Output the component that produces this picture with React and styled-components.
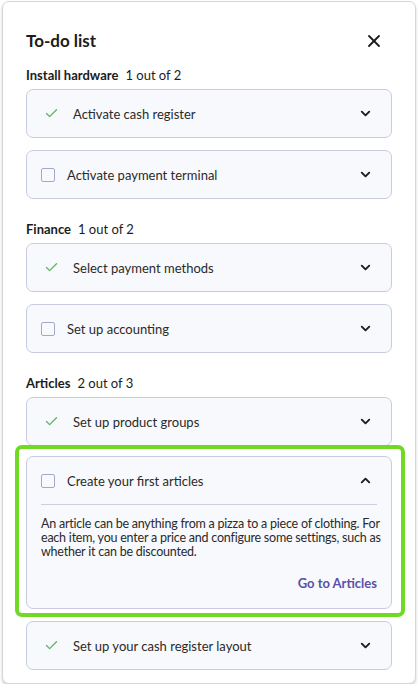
import React from "react";
import styled, { createGlobalStyle } from "styled-components";
import { ChevronDown, ChevronUp, X, Check } from "lucide-react";

const GlobalStyle = createGlobalStyle`
  html, body {
    margin: 0;
    padding: 0;
    background: #ffffff;
  }
  body {
    font-family: Lato, "Liberation Sans", sans-serif;
    color: #222;
  }
`;

const sections = [
  {
    title: "Install hardware",
    count: "1 out of 2",
    items: [
      { label: "Activate cash register", done: true },
      { label: "Activate payment terminal", done: false },
    ],
  },
  {
    title: "Finance",
    count: "1 out of 2",
    items: [
      { label: "Select payment methods", done: true },
      { label: "Set up accounting", done: false },
    ],
  },
  {
    title: "Articles",
    count: "2 out of 3",
    items: [
      { label: "Set up product groups", done: true },
      {
        label: "Create your first articles",
        done: false,
        open: true,
        text: "An article can be anything from a pizza to a piece of clothing. For each item, you enter a price and configure some settings, such as whether it can be discounted.",
        link: "Go to Articles",
      },
      { label: "Set up your cash register layout", done: true },
    ],
  },
];

const TodoItem = ({ item }) => {
  return (
    <Card $open={item.open}>
      <CardHeader>
        {item.done ? (
          <CheckMark>
            <Check size={15} strokeWidth={2.2} />
          </CheckMark>
        ) : (
          <Box />
        )}
        <Label>{item.label}</Label>
        <Toggle>
          {item.open ? (
            <ChevronUp size={15} strokeWidth={3} />
          ) : (
            <ChevronDown size={15} strokeWidth={3} />
          )}
        </Toggle>
      </CardHeader>
      {item.open && (
        <CardBody>
          <Description>{item.text}</Description>
          <LinkRow>
            <GoLink href="#">{item.link}</GoLink>
          </LinkRow>
        </CardBody>
      )}
    </Card>
  );
};

const App = () => {
  return (
    <>
      <GlobalStyle />
      <Panel>
        <TitleRow>
          <Title>To-do list</Title>
          <Close>
            <X size={20} strokeWidth={2.2} />
          </Close>
        </TitleRow>
        {sections.map((section) => (
          <Section key={section.title}>
            <SectionHeader>
              <strong>{section.title}</strong>
              <span>{section.count}</span>
            </SectionHeader>
            <CardList>
              {section.items.map((item) => (
                <TodoItem key={item.label} item={item} />
              ))}
            </CardList>
          </Section>
        ))}
      </Panel>
    </>
  );
};

const Panel = styled.div`
  margin: 1px 3px 0 2px;
  width: 414px;
  box-sizing: border-box;
  padding: 27px 23px 13px 23px;
  background: #fff;
  border: 1px solid #d6d6d6;
  border-radius: 7px;
  box-shadow: 0 2px 3px rgba(0, 0, 0, 0.18);
`;

const TitleRow = styled.div`
  display: flex;
  align-items: center;
  justify-content: space-between;
  height: 24px;
`;

const Title = styled.h1`
  margin: 0;
  font-size: 17px;
  font-weight: 700;
  line-height: 24px;
  color: #1c1c1c;
`;

const Close = styled.div`
  display: flex;
  color: #1c1c1c;
  margin-right: 8px;
`;

const Section = styled.section`
  margin-top: 22px;
  &:first-of-type {
    margin-top: 14px;
  }
`;

const SectionHeader = styled.div`
  display: flex;
  gap: 7px;
  font-size: 13px;
  line-height: 16px;
  margin-bottom: 6px;
  color: #1c1c1c;
  strong {
    font-weight: 700;
  }
`;

const CardList = styled.div`
  display: flex;
  flex-direction: column;
  gap: 12px;
`;

const Card = styled.div`
  position: relative;
  background: #f8f9fc;
  border: 1px solid #c9cce0;
  border-radius: 7px;
  padding: 0 14px;

  ${({ $open }) =>
    $open &&
    `
    margin-top: -2px;
    padding-bottom: 17px;
    &::after {
      content: "";
      position: absolute;
      top: -12px;
      left: -12px;
      right: -14px;
      bottom: -9px;
      border: 4px solid #6fd924;
      border-radius: 7px;
      pointer-events: none;
    }
  `}
`;

const CardHeader = styled.div`
  display: flex;
  align-items: center;
  height: 47px;
`;

const CheckMark = styled.span`
  display: flex;
  color: #5cba5e;
  margin-left: 3px;
  width: 29px;
`;

const Box = styled.span`
  width: 12px;
  height: 12px;
  border: 1.5px solid #a4a9c9;
  border-radius: 2px;
  margin-right: 12px;
  background: #f8f9fc;
`;

const Label = styled.span`
  flex: 1;
  font-size: 13px;
  color: #2a2a2a;
`;

const Toggle = styled.span`
  display: flex;
  color: #1c1c1c;
  margin-right: 4px;
`;

const CardBody = styled.div`
  border-top: 1px solid #cdd0e2;
  padding-top: 12px;
`;

const Description = styled.p`
  margin: 0 -4px 0 0;
  font-size: 12.5px;
  letter-spacing: -0.22px;
  line-height: 14px;
  color: #2a2a2a;
`;

const LinkRow = styled.div`
  display: flex;
  justify-content: flex-end;
  margin-top: 16px;
`;

const GoLink = styled.a`
  font-size: 13px;
  line-height: 16px;
  font-weight: 700;
  color: #5b4fa6;
  text-decoration: none;
`;

export default App;
